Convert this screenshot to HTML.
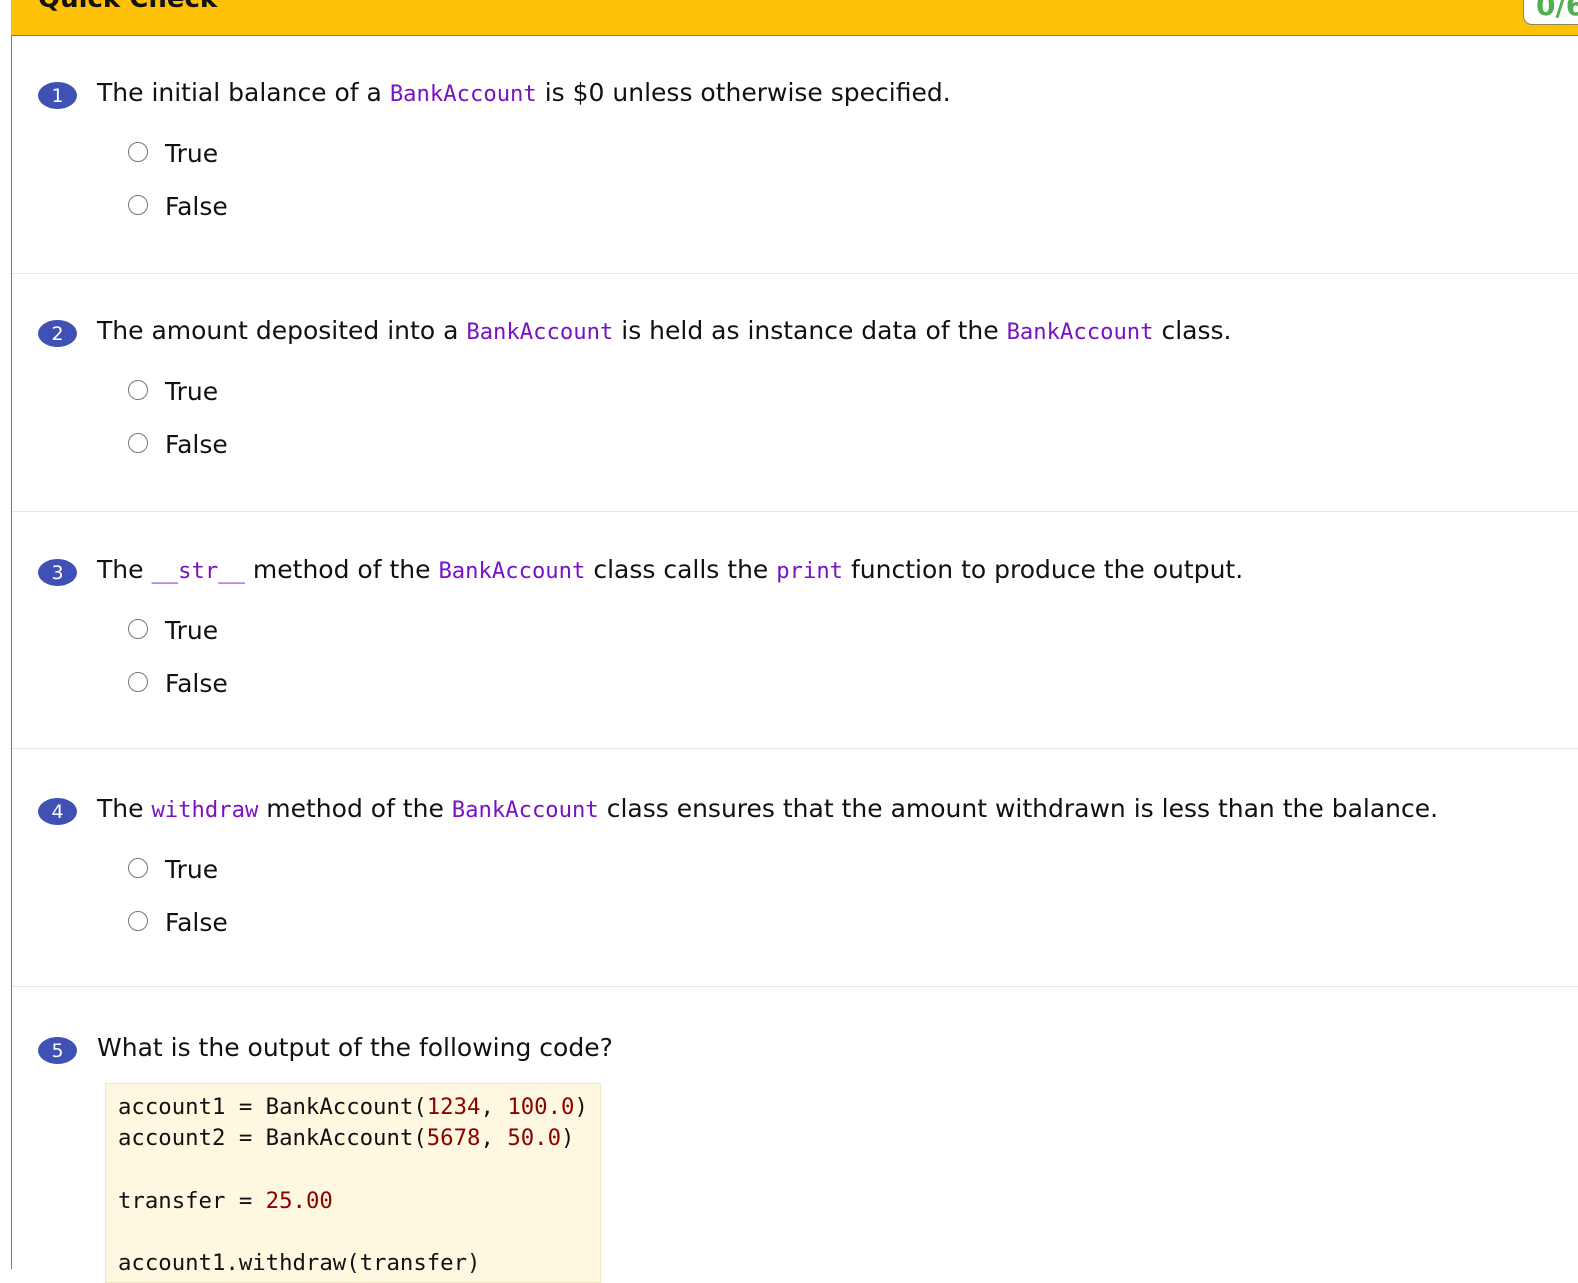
<!DOCTYPE html>
<html><head><meta charset="utf-8"><style>
body{margin:0;width:1578px;height:1269px;overflow:hidden;background:#fff;font-family:"DejaVu Sans","Liberation Sans",sans-serif;color:#111;position:relative}
.left{position:absolute;left:11px;top:0;width:1px;height:1269px;background:#6b7b8a}
.hdr{position:absolute;left:11px;top:0;width:1567px;height:35px;background:#FFC107;border-bottom:1px solid #8a7d3a}
.hdr .t{position:absolute;left:27px;top:-16px;font-weight:bold;font-size:26px;color:#111}
.score{position:absolute;left:1512px;top:-10px;width:80px;height:33px;background:#fff;border:1px solid #8a8a5a;border-radius:9px;color:#4caf50;font-weight:bold;font-size:28px;padding-left:12px;line-height:30px}
.q{position:absolute;left:12px;width:1566px;height:237px}
.sep{position:absolute;left:12px;width:1566px;height:1px;background:#e8e8e8}
.num{position:absolute;left:26px;top:40px;width:39px;height:27px;border-radius:50%;background:#3F51B5;color:#fff;font-size:19px;text-align:center;line-height:28px}
.txt{position:absolute;left:85px;top:36px;font-size:25px;white-space:nowrap}
code{font-family:"DejaVu Sans Mono","Liberation Mono",monospace;font-size:22.2px;color:#7a12c4}
.opt{position:absolute;left:116px;font-size:25px}
.opt span{display:inline-block;width:18px;height:18px;border:1.5px solid #777;border-radius:50%;vertical-align:middle;margin-right:17px;position:relative;top:-3px}
.code{position:absolute;left:105px;top:1083px;width:496px;height:200px;background:#FFF8E1;border:1px solid #f0e6c8;font-family:"DejaVu Sans Mono","Liberation Mono",monospace;font-size:22.3px;line-height:31.3px;padding:8px 12px;white-space:pre;box-sizing:border-box}
.n{color:#8b0000}
</style></head><body>
<div class="left"></div>
<div class="hdr"><div class="t">Quick Check</div><div class="score">0/6</div></div>

<div class="q" style="top:42px"><div class="num">1</div><div class="txt">The initial balance of a <code>BankAccount</code> is $0 unless otherwise specified.</div>
<div class="opt" style="top:97px"><span></span>True</div><div class="opt" style="top:150px"><span></span>False</div></div>
<div class="sep" style="top:273px"></div>

<div class="q" style="top:280px"><div class="num">2</div><div class="txt">The amount deposited into a <code>BankAccount</code> is held as instance data of the <code>BankAccount</code> class.</div>
<div class="opt" style="top:97px"><span></span>True</div><div class="opt" style="top:150px"><span></span>False</div></div>
<div class="sep" style="top:511px"></div>

<div class="q" style="top:519px"><div class="num">3</div><div class="txt">The <code>__str__</code> method of the <code>BankAccount</code> class calls the <code>print</code> function to produce the output.</div>
<div class="opt" style="top:97px"><span></span>True</div><div class="opt" style="top:150px"><span></span>False</div></div>
<div class="sep" style="top:748px"></div>

<div class="q" style="top:758px"><div class="num">4</div><div class="txt">The <code>withdraw</code> method of the <code>BankAccount</code> class ensures that the amount withdrawn is less than the balance.</div>
<div class="opt" style="top:97px"><span></span>True</div><div class="opt" style="top:150px"><span></span>False</div></div>
<div class="sep" style="top:986px"></div>

<div class="q" style="top:997px"><div class="num">5</div><div class="txt">What is the output of the following code?</div></div>
<div class="code">account1 = BankAccount(<span class="n">1234</span>, <span class="n">100.0</span>)
account2 = BankAccount(<span class="n">5678</span>, <span class="n">50.0</span>)

transfer = <span class="n">25.00</span>

account1.withdraw(transfer)</div>
</body></html>
